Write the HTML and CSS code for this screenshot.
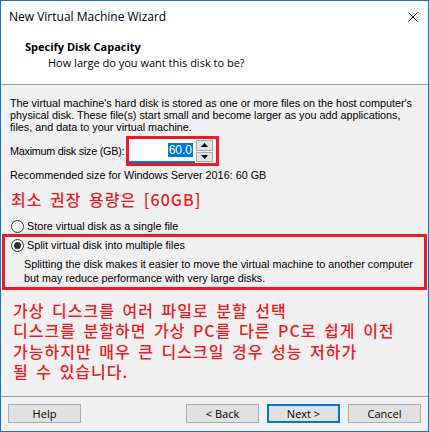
FILE: index.html
```html
<!DOCTYPE html>
<html lang="en">
<head>
<meta charset="utf-8">
<title>New Virtual Machine Wizard</title>
<link rel="stylesheet" href="styles.css">
</head>
<body>
<div class="window">
  <div class="titlebar">
    <span class="title">New Virtual Machine Wizard</span>
    <svg class="close" width="10" height="10" viewBox="0 0 10 10"><path d="M0.5 0.5 L9.5 9.5 M9.5 0.5 L0.5 9.5" stroke="#000" stroke-width="1" fill="none"/></svg>
  </div>
  <div class="header">
    <div class="h-title">Specify Disk Capacity</div>
    <div class="h-sub">How large do you want this disk to be?</div>
  </div>
  <div class="content">
    <p class="intro">The virtual machine's hard disk is stored as one or more files on the host computer's<br>physical disk. These file(s) start small and become larger as you add applications,<br>files, and data to your virtual machine.</p>
    <div class="size-row">
      <span class="label">Maximum disk size (GB):</span>
      <div class="spin-box">
        <div class="input"><span class="sel">60.0</span></div>
        <div class="spin">
          <div class="spin-btn"><svg width="7" height="4" viewBox="0 0 7 4"><path d="M3.5 0 L7 4 L0 4 Z" fill="#000"/></svg></div>
          <div class="spin-btn"><svg width="7" height="4" viewBox="0 0 7 4"><path d="M0 0 L7 0 L3.5 4 Z" fill="#000"/></svg></div>
        </div>
      </div>
    </div>
    <p class="rec">Recommended size for Windows Server 2016: 60 GB</p>
    <p class="ko-note">최소 권장 용량은 [60GB]</p>
    <div class="radio"><span class="circle"></span><span>Store virtual disk as a single file</span></div>
    <div class="split-box">
      <div class="radio"><span class="circle checked"></span><span>Split virtual disk into multiple files</span></div>
      <p class="desc">Splitting the disk makes it easier to move the virtual machine to another computer<br>but may reduce performance with very large disks.</p>
    </div>
    <div class="ko-body">
      <div class="ko-line">가상 디스크를 여러 파일로 분할 선택</div>
      <div class="ko-line">디스크를 분할하면 가상 PC를 다른 PC로 쉽게 이전</div>
      <div class="ko-line">가능하지만 매우 큰 디스크일 경우 성능 저하가</div>
      <div class="ko-line">될 수 있습니다.</div>
    </div>
  </div>
  <div class="footer">
    <div class="btn">Help</div>
    <div class="spacer"></div>
    <div class="btn">&lt; Back</div>
    <div class="btn default">Next &gt;</div>
    <div class="btn">Cancel</div>
  </div>
</div>
</body>
</html>
```
FILE: styles.css
```css
* { box-sizing: border-box; }
html, body { margin: 0; padding: 0; }
body {
  width: 429px;
  height: 432px;
  font-family: "Liberation Sans", Arial, sans-serif;
  font-size: 10.8px;
  color: #000;
  background: #fff;
}
.window {
  width: 429px;
  height: 432px;
  border: 1px solid #1b72c0;
  display: flex;
  flex-direction: column;
  background: #f0f0f0;
}
.titlebar {
  height: 31px;
  background: #fff;
  display: flex;
  align-items: center;
  padding-left: 8px;
  padding-right: 10px;
}
.title {
  font-family: "Open Sans", "Noto Sans", sans-serif;
  font-size: 12px;
  flex: 1;
  color: #000;
}
.close { display: block; }
.header {
  height: 53px;
  background: #fff;
  border-bottom: 1px solid #a0a0a0;
  padding-top: 7px;
}
.h-title {
  font-family: "Open Sans", "Noto Sans", sans-serif;
  font-weight: 700;
  font-size: 11px;
  line-height: 16px;
  padding-left: 24px;
}
.h-sub {
  font-family: "Open Sans", "Noto Sans", sans-serif;
  font-size: 11px;
  line-height: 16px;
  padding-left: 47px;
}
.content {
  flex: 1;
  padding: 12px 0 0 9px;
}
p { margin: 0; }
.intro {
  line-height: 12px;
  white-space: nowrap;
}
.size-row {
  display: flex;
  align-items: center;
  margin-top: 3px;
}
.label {
  width: 116px;
  white-space: nowrap;
  letter-spacing: -0.25px;
}
.spin-box {
  width: 93px;
  height: 30px;
  border: 3px solid #ec1c24;
  display: flex;
  padding-right: 3px;
}
.input {
  width: 66px;
  background: #fff;
  border-bottom: 2px solid #0078d7;
  display: flex;
  align-items: center;
  justify-content: flex-end;
  padding-right: 2px;
  font-size: 12px;
}
.sel {
  background: #0078d7;
  color: #fff;
  line-height: 14px;
  padding: 0 1px 0 1px;
}
.spin {
  width: 18px;
  display: flex;
  flex-direction: column;
  gap: 1px;
  padding: 1px 0 1px 1px;
}
.spin-btn {
  flex: 1;
  background: #e1e1e1;
  border: 1px solid #adadad;
  display: flex;
  align-items: center;
  justify-content: center;
}
.spin-btn svg { display: block; }
.rec {
  margin-top: 3px;
  line-height: 12px;
}
.ko-note, .ko-body {
  font-family: "Noto Sans CJK KR", sans-serif;
  font-size: 16px;
  color: #ec1c24;
  font-weight: 500;
  word-spacing: 3px;
  letter-spacing: 1px;
  white-space: nowrap;
}
.ko-note {
  margin-top: 8px;
  line-height: 20px;
  padding-left: 1px;
}
.radio {
  display: flex;
  align-items: center;
  height: 16px;
  gap: 3px;
  padding-left: 1px;
  white-space: nowrap;
}
.content > .radio { margin-top: 9px; }
.circle {
  width: 13px;
  height: 13px;
  border: 1px solid #333;
  border-radius: 50%;
  background: #fff;
  display: flex;
  align-items: center;
  justify-content: center;
}
.circle.checked::after {
  content: "";
  width: 7px;
  height: 7px;
  border-radius: 50%;
  background: #333;
}
.split-box {
  margin-left: -8px;
  width: 425px;
  border: 3px solid #ec1c24;
  padding: 0 0 2px 5px;
}
.desc {
  margin-top: 4px;
  padding-left: 14px;
  line-height: 14px;
  white-space: nowrap;
}
.ko-body {
  margin-top: 10px;
  padding-left: 3px;
  display: flex;
  flex-direction: column;
}
.ko-line {
  height: 20.3px;
  line-height: 20.3px;
}
.footer {
  height: 35px;
  border-top: 1px solid #a0a0a0;
  display: flex;
  padding: 7px 7px 0 7px;
  gap: 8px;
  align-items: flex-start;
}
.spacer { flex: 1; }
.btn {
  width: 73px;
  height: 19px;
  background: #e1e1e1;
  border: 1px solid #adadad;
  font-family: "Open Sans", "Noto Sans", sans-serif;
  font-size: 11px;
  display: flex;
  align-items: center;
  justify-content: center;
}
.btn.default {
  border: 2px solid #0078d7;
}
```
